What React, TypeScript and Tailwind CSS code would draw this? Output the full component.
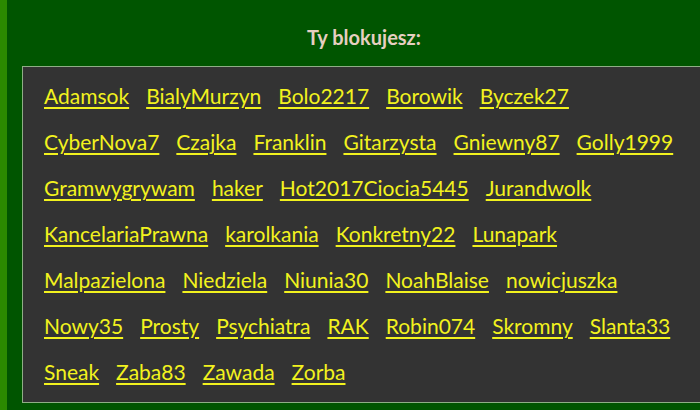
const blocked = [
  "Adamsok", "BialyMurzyn", "Bolo2217", "Borowik", "Byczek27",
  "CyberNova7", "Czajka", "Franklin", "Gitarzysta", "Gniewny87", "Golly1999",
  "Gramwygrywam", "haker", "Hot2017Ciocia5445", "Jurandwolk",
  "KancelariaPrawna", "karolkania", "Konkretny22", "Lunapark",
  "Malpazielona", "Niedziela", "Niunia30", "NoahBlaise", "nowicjuszka",
  "Nowy35", "Prosty", "Psychiatra", "RAK", "Robin074", "Skromny", "Slanta33",
  "Sneak", "Zaba83", "Zawada", "Zorba",
];

export default function App() {
  return (
    <div className="flex h-[410px] w-[700px] overflow-hidden bg-[#005500] font-['Lato',sans-serif]">
      <div className="w-[7px] shrink-0 bg-[#2b8a00]" />
      <div className="flex w-[699px] shrink-0 flex-col pl-[15px]">
        <h2 className="mt-[26px] text-center text-[20px] font-bold leading-[22px] text-[#e6cfc0]">
          Ty blokujesz:
        </h2>
        <div className="mt-[18px] h-[337px] border border-[#8fae86] bg-[#333333] pl-[21px] pr-[14px] pt-[6px]">
          <div className="flex flex-wrap gap-x-[17px]">
            {blocked.map((name) => (
              <a
                key={name}
                href="#"
                className="text-[21px] leading-[46px] text-[#f2f21e] underline decoration-[1.5px] underline-offset-[3px]"
              >
                {name}
              </a>
            ))}
          </div>
        </div>
      </div>
    </div>
  );
}
